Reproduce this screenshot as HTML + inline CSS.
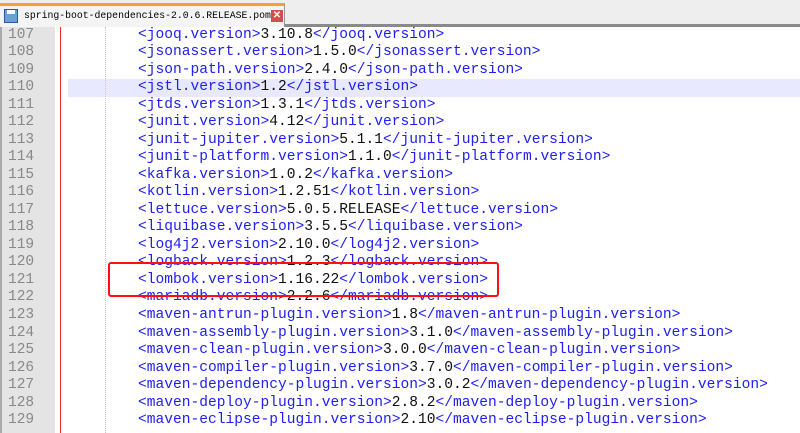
<!DOCTYPE html>
<html><head><meta charset="utf-8"><style>
body{margin:0;width:800px;height:433px;overflow:hidden;background:#fff;position:relative;font-family:"Liberation Mono",monospace}
#bar{position:absolute;left:0;top:0;width:800px;height:24px;background:#eeeeee;border-bottom:3px solid #8a8a8a}
#tab{position:absolute;left:0;top:3px;width:285px;height:24px;background:#f4f4f4;border-top:3px solid #f5a030;border-right:1px solid #999;box-sizing:border-box;font-size:9.8px;line-height:20px;color:#000;white-space:nowrap;overflow:hidden}
#gut{position:absolute;left:0;top:27px;width:55px;height:406px;background:#e4e4e4;border-left:2px solid #aaa;box-sizing:border-box}
#red{position:absolute;left:60px;top:27px;width:1px;height:406px;background:#f03030}
#guide{position:absolute;left:105px;top:27px;height:406px;border-left:1px dotted #c8c8c8}
.r{position:absolute;left:0;width:800px;height:17.5px;font-size:14.58px;line-height:17.5px;white-space:pre}
.n{position:absolute;left:8px;color:#888;font-size:14.5px}
.c{position:absolute;left:138px;color:#2020ee}
.c b{color:#111;font-weight:normal}
#hl{position:absolute;left:68px;top:79px;width:732px;height:17.5px;background:#e8e8ff}
#box{position:absolute;left:108px;top:262px;width:391px;height:35px;border:2px solid #ff1010;border-radius:3px;box-sizing:border-box}
</style></head><body>
<div id="bar"></div>
<div id="tab"><span style="position:absolute;left:4px;top:3px;width:14px;height:14px;background:#6aa0d8;border:1px solid #2a5a9a;box-sizing:border-box"></span><span style="position:absolute;left:7px;top:4px;width:8px;height:4px;background:#fff"></span><span style="position:absolute;left:24px;top:0">spring-boot-dependencies-2.0.6.RELEASE.pom</span><span style="position:absolute;left:271px;top:4px;width:12px;height:12px;background:#d05050;color:#fff;font-size:10px;line-height:12px;text-align:center;font-family:'Liberation Sans',sans-serif;font-weight:bold">✕</span></div>
<div id="gut"></div>
<div id="hl"></div>
<div id="red"></div>
<div id="guide"></div>
<div id="lines"></div>
<div id="box"></div>
<script>
var d=[["jooq","3.10.8"],["jsonassert","1.5.0"],["json-path","2.4.0"],["jstl","1.2"],["jtds","1.3.1"],["junit","4.12"],["junit-jupiter","5.1.1"],["junit-platform","1.1.0"],["kafka","1.0.2"],["kotlin","1.2.51"],["lettuce","5.0.5.RELEASE"],["liquibase","3.5.5"],["log4j2","2.10.0"],["logback","1.2.3"],["lombok","1.16.22"],["mariadb","2.2.6"],["maven-antrun-plugin","1.8"],["maven-assembly-plugin","3.1.0"],["maven-clean-plugin","3.0.0"],["maven-compiler-plugin","3.7.0"],["maven-dependency-plugin","3.0.2"],["maven-deploy-plugin","2.8.2"],["maven-eclipse-plugin","2.10"]];
var h="";for(var i=0;i<d.length;i++){var t=26.5+i*17.53;h+='<div class="r" style="top:'+t+'px"><span class="n">'+(107+i)+'</span><span class="c">&lt;'+d[i][0]+'.version&gt;<b>'+d[i][1]+'</b>&lt;/'+d[i][0]+'.version&gt;</span></div>';}
document.getElementById("lines").innerHTML=h;
</script>
</body></html>
